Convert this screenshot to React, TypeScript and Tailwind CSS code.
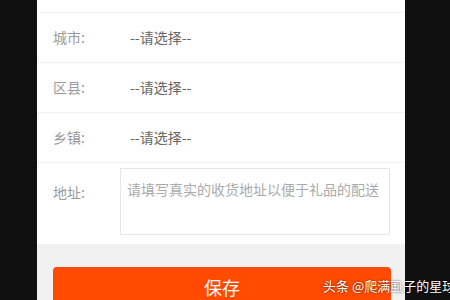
import React from "react";

const font = { fontFamily: '"Noto Sans CJK SC", "Noto Sans", sans-serif' };

function Row({ label, value }: { label: string; value: string }) {
  return (
    <div className="flex h-[50px] shrink-0 items-center border-b border-[#f3f3f3] pl-4">
      <span className="w-[77px] text-[14px] text-[#9a9a9a]">{label}</span>
      <span className="text-[14px] text-[#666]">{value}</span>
    </div>
  );
}

export default function App() {
  return (
    <div className="relative flex h-[300px] w-[450px] overflow-hidden bg-[#101010]" style={font}>
      <div className="ml-[37px] flex w-[368px] flex-col bg-white">
        <div className="ml-[3px] h-[13px] shrink-0 border-b border-[#f3f3f3]" />
        <Row label="城市:" value="--请选择--" />
        <Row label="区县:" value="--请选择--" />
        <Row label="乡镇:" value="--请选择--" />
        <div className="flex h-[81px] shrink-0 pl-4 pt-[5px]">
          <span className="mt-[14px] w-[67px] text-[14px] text-[#9a9a9a]">地址:</span>
          <div className="h-[67px] w-[270px] border border-[#e6e6e6] px-[6px] pt-[10px] text-[14px] leading-[20px] text-[#aaa]">
            请填写真实的收货地址以便于礼品的配送
          </div>
        </div>
        <div className="flex-1 bg-[#f1f1f1] px-4 pt-[23px]">
          <div className="flex h-[40px] w-[338px] items-center justify-center rounded-[4px] bg-[#ff4a00] text-[18px] text-white">
            保存
          </div>
        </div>
      </div>
      <div
        className="absolute left-[323px] top-[276px] whitespace-nowrap text-[13px] text-white"
        style={{ textShadow: "0 0 2px rgba(0,0,0,0.8)" }}
      >
        头条 @爬满虱子的星球
      </div>
    </div>
  );
}
